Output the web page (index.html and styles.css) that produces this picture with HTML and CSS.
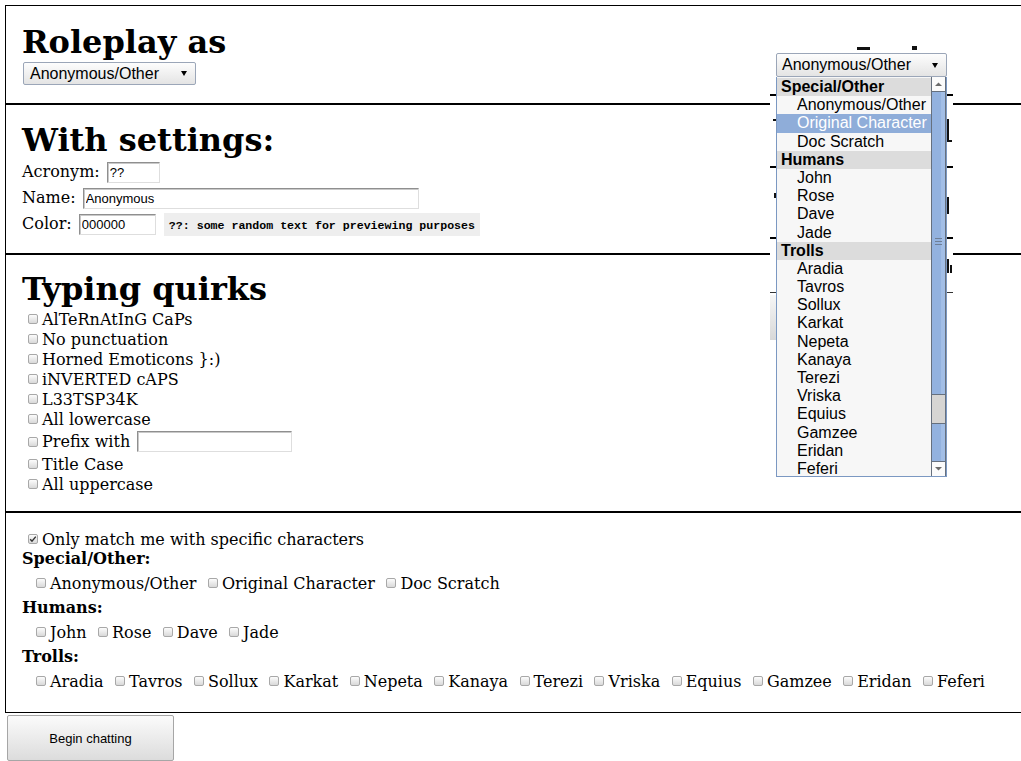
FILE: index.html
```html
<!DOCTYPE html>
<html>
<head>
<meta charset="utf-8">
<title>Roleplay settings</title>
<link rel="stylesheet" href="styles.css">
</head>
<body>
<form class="page">
  <section class="sec sec-role">
    <h1 class="title">Roleplay as</h1>
    <div class="select select-main"><span class="select-text">Anonymous/Other</span><span class="select-arrow"></span></div>
  </section>

  <section class="sec sec-settings">
    <h1 class="title title-settings">With settings:</h1>
    <div class="field">Acronym: <input class="txt w-acr" value="??"></div>
    <div class="field">Name: <input class="txt w-name" value="Anonymous"></div>
    <div class="field">Color: <input class="txt w-color" value="000000"> <span class="preview">??: some random text for previewing purposes</span></div>
  </section>

  <section class="sec sec-quirks">
    <h1 class="title">Typing quirks</h1>
    <label class="quirk"><input type="checkbox" class="cb">AlTeRnAtInG CaPs</label>
    <label class="quirk"><input type="checkbox" class="cb">No punctuation</label>
    <label class="quirk"><input type="checkbox" class="cb">Horned Emoticons }:)</label>
    <label class="quirk"><input type="checkbox" class="cb">iNVERTED cAPS</label>
    <label class="quirk"><input type="checkbox" class="cb">L33TSP34K</label>
    <label class="quirk"><input type="checkbox" class="cb">All lowercase</label>
    <label class="quirk quirk-prefix"><input type="checkbox" class="cb">Prefix with<input class="txt w-prefix" value=""></label>
    <label class="quirk"><input type="checkbox" class="cb">Title Case</label>
    <label class="quirk"><input type="checkbox" class="cb">All uppercase</label>
  </section>

  <section class="sec sec-match">
    <label class="quirk"><span class="cb-wrap"><input type="checkbox" class="cb" checked><svg class="tick" width="10" height="10" viewBox="0 0 10 10"><path d="M2.2 5.2 L4 7.2 L7.8 2.6" fill="none" stroke="#333" stroke-width="1.4"/></svg></span>Only match me with specific characters</label>
    <div class="grp-title">Special/Other:</div>
    <div class="grp-row">
      <label class="opt"><input type="checkbox" class="cb">Anonymous/Other</label>
      <label class="opt"><input type="checkbox" class="cb">Original Character</label>
      <label class="opt"><input type="checkbox" class="cb">Doc Scratch</label>
    </div>
    <div class="grp-title">Humans:</div>
    <div class="grp-row">
      <label class="opt"><input type="checkbox" class="cb">John</label>
      <label class="opt"><input type="checkbox" class="cb">Rose</label>
      <label class="opt"><input type="checkbox" class="cb">Dave</label>
      <label class="opt"><input type="checkbox" class="cb">Jade</label>
    </div>
    <div class="grp-title">Trolls:</div>
    <div class="grp-row">
      <label class="opt"><input type="checkbox" class="cb">Aradia</label>
      <label class="opt"><input type="checkbox" class="cb">Tavros</label>
      <label class="opt"><input type="checkbox" class="cb">Sollux</label>
      <label class="opt"><input type="checkbox" class="cb">Karkat</label>
      <label class="opt"><input type="checkbox" class="cb">Nepeta</label>
      <label class="opt"><input type="checkbox" class="cb">Kanaya</label>
      <label class="opt"><input type="checkbox" class="cb">Terezi</label>
      <label class="opt"><input type="checkbox" class="cb">Vriska</label>
      <label class="opt"><input type="checkbox" class="cb">Equius</label>
      <label class="opt"><input type="checkbox" class="cb">Gamzee</label>
      <label class="opt"><input type="checkbox" class="cb">Eridan</label>
      <label class="opt"><input type="checkbox" class="cb">Feferi</label>
    </div>
  </section>

  <button type="button" class="begin">Begin chatting</button>
</form>

<div class="ghost" aria-hidden="true">
  <div class="g-mark g-top1"></div>
  <div class="g-mark g-top2"></div>
  <div class="g-line g-l1"></div>
  <div class="g-line g-l2"></div>
  <div class="g-line g-l3"></div>
  <div class="g-thin"></div>
  <div class="g-btn"></div>
  <div class="g-mark g-L"></div>
  <div class="g-mark g-Lfoot"></div>
  <div class="g-mark g-l"></div>
  <div class="g-mark g-h"></div>
  <div class="g-mark g-h2"></div>
  <div class="g-mark g-left1"></div>
  <div class="g-mark g-left2"></div>
</div>

<div class="dropdown">
  <div class="select dd-face"><span class="select-text">Anonymous/Other</span><span class="select-arrow"></span></div>
  <div class="dd-list">
    <div class="dd-options">
      <div class="dd-group">Special/Other</div>
      <div class="dd-item">Anonymous/Other</div>
      <div class="dd-item dd-sel">Original Character</div>
      <div class="dd-item">Doc Scratch</div>
      <div class="dd-group">Humans</div>
      <div class="dd-item">John</div>
      <div class="dd-item">Rose</div>
      <div class="dd-item">Dave</div>
      <div class="dd-item">Jade</div>
      <div class="dd-group">Trolls</div>
      <div class="dd-item">Aradia</div>
      <div class="dd-item">Tavros</div>
      <div class="dd-item">Sollux</div>
      <div class="dd-item">Karkat</div>
      <div class="dd-item">Nepeta</div>
      <div class="dd-item">Kanaya</div>
      <div class="dd-item">Terezi</div>
      <div class="dd-item">Vriska</div>
      <div class="dd-item">Equius</div>
      <div class="dd-item">Gamzee</div>
      <div class="dd-item">Eridan</div>
      <div class="dd-item">Feferi</div>
    </div>
    <div class="dd-scroll">
      <div class="sb-btn sb-up"><svg width="13" height="14" viewBox="0 0 13 14"><path d="M3 9 L6.5 5.5 L10 9 Z" fill="#6b6b6b"/></svg></div>
      <div class="sb-blue sb-thumb"><svg class="grip" width="7" height="7" viewBox="0 0 7 7"><path d="M0 0.5H7M0 3.5H7M0 6.5H7" stroke="#6f7f96" stroke-width="1"/></svg></div>
      <div class="sb-gray"></div>
      <div class="sb-blue sb-rest"></div>
      <div class="sb-btn sb-down"><svg width="13" height="14" viewBox="0 0 13 14"><path d="M3 5 L6.5 8.5 L10 5 Z" fill="#6b6b6b"/></svg></div>
    </div>
  </div>
</div>
</body>
</html>
```

FILE: styles.css
```css
html, body {
  margin: 0;
}
body {
  padding: 5px 0 0 5px;
  height: 761px;
  box-sizing: border-box;
  overflow: hidden;
  background: #fff;
  color: #000;
  font: 16px "DejaVu Serif", serif;
}

.sec {
  border: 1px solid #000;
  border-right: 0;
  box-sizing: border-box;
  padding-left: 16px;
}
.sec-role { height: 99px; padding-top: 20px; }
.sec-settings { height: 150px; padding-top: 19px; }
.sec-quirks { height: 258px; padding-top: 18px; }
.sec-match { height: 201px; padding-top: 16px; }

.title {
  font: bold 32px/32px "DejaVu Serif", serif;
  margin: 0 0 4px;
}
.title-settings { margin-bottom: 3px; }

/* select face */
.select {
  box-sizing: border-box;
  display: flex;
  align-items: center;
  justify-content: space-between;
  border: 1px solid #9ba6b8;
  border-radius: 2px;
  background: linear-gradient(#fdfdfd, #e4e4e4);
  font: 16px "Liberation Sans", Arial, sans-serif;
  color: #000;
}
.select-main {
  width: 173px;
  height: 23px;
  margin-left: 1px;
  padding: 0 8px 0 6px;
}
.select-arrow {
  width: 0;
  height: 0;
  border-left: 3px solid transparent;
  border-right: 3px solid transparent;
  border-top: 5px solid #000;
}

/* settings */
.field {
  height: 26px;
  line-height: 26px;
  white-space: nowrap;
}
.txt {
  box-sizing: border-box;
  height: 21px;
  margin: 0 0 0 2px;
  padding: 0 2px;
  border: 1px solid;
  border-color: #8f8f8f #dedede #dedede #8f8f8f;
  box-shadow: inset 1px 1px 0 #c9c9c9;
  font: 13px "Liberation Sans", Arial, sans-serif;
  color: #000;
  background: #fff;
  vertical-align: middle;
}
.w-acr { width: 53px; }
.w-name { width: 336px; }
.w-color { width: 77px; }
.w-prefix { width: 155px; margin-left: 7px; }
.preview {
  display: inline-flex;
  align-items: center;
  vertical-align: middle;
  box-sizing: border-box;
  height: 23px;
  line-height: 14px;
  padding: 1px 5px 0;
  margin-left: 3px;
  background: #eeeeee;
  font: bold 11.6px "Liberation Mono", "Courier New", monospace;
}

/* checkbox rows */
.quirk {
  display: flex;
  align-items: center;
  height: 20px;
  white-space: nowrap;
}
.quirk-prefix { height: 25px; }
.cb {
  -webkit-appearance: none;
  appearance: none;
  box-sizing: border-box;
  flex: none;
  width: 10px;
  height: 10px;
  margin: 0 4px 0 6px;
  border: 1px solid #a8a8a8;
  border-radius: 2px;
  background: linear-gradient(#fcfcfc, #d9d9d9);
}
.cb-wrap {
  position: relative;
  display: inline-flex;
}
.tick {
  position: absolute;
  left: 6px;
  top: 0;
}

.grp-title {
  font-weight: bold;
  height: 19px;
  line-height: 19px;
}
.grp-row {
  display: flex;
  align-items: center;
  height: 20px;
  padding: 5px 0 5px 8px;
  white-space: nowrap;
}
.opt {
  display: flex;
  align-items: center;
  margin-right: 5.4px;
}

.begin {
  display: block;
  box-sizing: border-box;
  margin: 2px 0 0 2px;
  width: 167px;
  height: 46px;
  border: 1px solid #a6a6a6;
  border-radius: 2px;
  background: linear-gradient(#fbfbfb, #dcdcdc);
  font: 13px "Liberation Sans", Arial, sans-serif;
  color: #000;
}

/* ghost remnant behind the open list */
.ghost {
  position: absolute;
  left: 770px;
  top: 40px;
  width: 183px;
  height: 305px;
  background: #fff;
}
.g-line {
  position: absolute;
  left: 0;
  right: 0;
  height: 2px;
  background: #000;
}
.g-l1 { top: 54px; }
.g-l2 { top: 126px; }
.g-l3 { top: 197px; }
.g-thin {
  position: absolute;
  left: 0;
  right: 0;
  top: 252px;
  height: 1px;
  background: #333;
}
.g-btn {
  position: absolute;
  left: 0;
  top: 255px;
  width: 8px;
  height: 45px;
  background: linear-gradient(#f6f6f6, #d8d8d8);
}
.g-mark {
  position: absolute;
  background: #111;
}
.g-top1 { left: 87px; top: 7px; width: 13px; height: 3px; }
.g-top2 { left: 142px; top: 6px; width: 5px; height: 4px; }
.g-L { left: 177px; top: 79px; width: 2px; height: 23px; }
.g-Lfoot { left: 177px; top: 100px; width: 5px; height: 2px; }
.g-l { left: 177px; top: 157px; width: 2px; height: 17px; }
.g-h { left: 177px; top: 219px; width: 2px; height: 14px; }
.g-h2 { left: 180px; top: 225px; width: 2px; height: 8px; }
.g-left1 { left: 3px; top: 79px; width: 3px; height: 2px; }
.g-left2 { left: 4px; top: 153px; width: 2px; height: 5px; }

/* open dropdown */
.dropdown {
  position: absolute;
  left: 776px;
  top: 53px;
  width: 171px;
  font: 16px "Liberation Sans", Arial, sans-serif;
}
.dd-face {
  height: 24px;
  padding: 0 8px 0 5px;
}
.dd-list {
  box-sizing: border-box;
  height: 400px;
  display: flex;
  border: 1px solid #7b98c2;
  border-top: 0;
  background: #f7f7f7;
}
.dd-options {
  flex: 1;
  padding-top: 1px;
  overflow: hidden;
}
.dd-group {
  font-weight: bold;
  background: #dcdcdc;
  line-height: 18.2px;
  height: 18.2px;
  padding-left: 4px;
}
.dd-item {
  line-height: 18.2px;
  height: 18.2px;
  padding-left: 20px;
}
.dd-sel {
  background: #8fadd9;
  color: #fff;
}
.dd-scroll {
  width: 15px;
  display: flex;
  flex-direction: column;
  border-left: 1px solid #66707e;
  box-sizing: border-box;
}
.sb-btn {
  height: 15px;
  box-sizing: border-box;
  background: #fbfbfb;
  border: 1px solid #66707e;
  border-left: 0;
  display: flex;
  align-items: center;
  justify-content: center;
}
.sb-up { border-top: 0; }
.sb-down { border-bottom: 0; }
.sb-blue {
  background: linear-gradient(90deg, #93b2df 0, #93b2df 9px, #a2bee6 9px);
  border-right: 1px solid #66707e;
}
.sb-thumb {
  height: 302px;
  display: flex;
  align-items: center;
  justify-content: center;
}
.grip { margin-top: -4px; }
.sb-gray {
  height: 30px;
  box-sizing: border-box;
  background: #d6d5d3;
  border-top: 1px solid #66707e;
  border-bottom: 1px solid #66707e;
  border-right: 1px solid #66707e;
}
.sb-rest { flex: 1; }
```
